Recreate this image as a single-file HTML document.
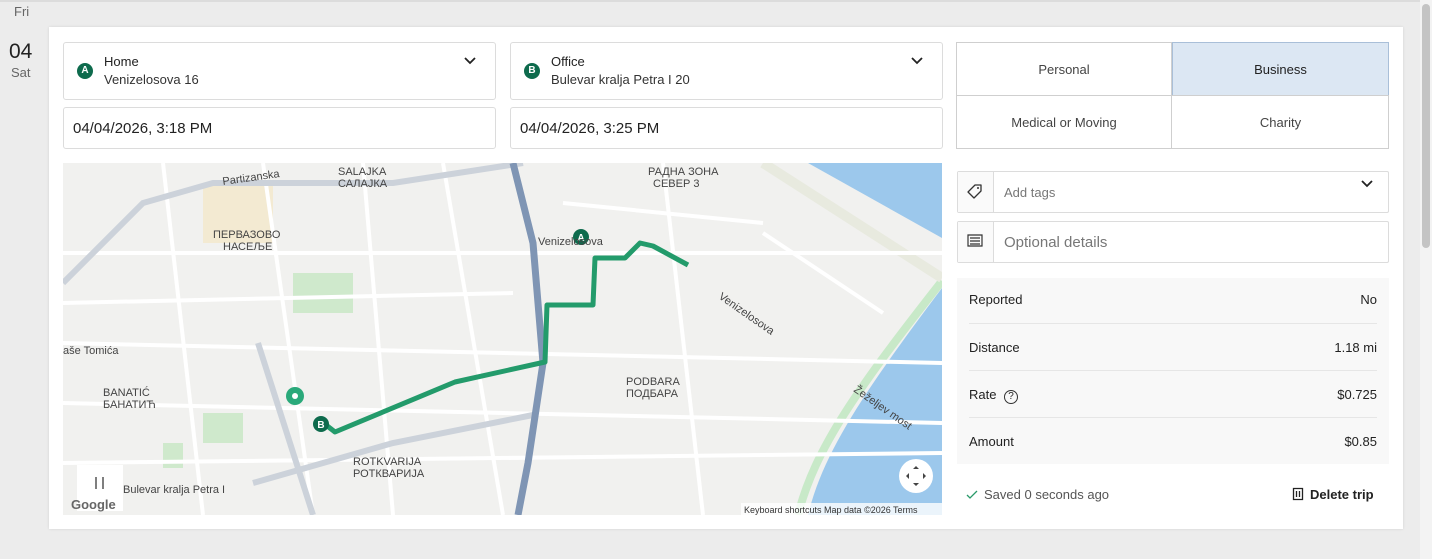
<!DOCTYPE html>
<html><head><meta charset="utf-8"><style>
*{box-sizing:border-box;margin:0;padding:0}
body{width:1432px;height:559px;background:#ececec;font-family:"Liberation Sans",sans-serif;color:#222;position:relative;overflow:hidden}
.abs{position:absolute}
.box{position:absolute;background:#fff;border:1px solid #dcdcdc;border-radius:3px}
.pin{width:16px;height:16px;border-radius:50%;background:#0e6b4d;color:#fff;font-size:10px;font-weight:bold;text-align:center;line-height:16px}
.t13{font-size:13px}
.row{position:absolute;left:969px;width:408px;font-size:13px;display:flex;justify-content:space-between}
</style></head><body>
<div class="abs" style="left:0;top:0;width:1420px;height:2px;background:#dcdcdc"></div>
<div class="abs" style="left:14px;top:4px;font-size:13px;color:#666">Fri</div>
<div class="abs" style="left:9px;top:40px;font-size:21px;color:#222">04</div>
<div class="abs" style="left:11px;top:65px;font-size:13px;color:#666">Sat</div>
<div class="abs" style="left:1420px;top:0;width:12px;height:559px;background:#f3f3f3"></div>
<div class="abs" style="left:1422px;top:4px;width:8px;height:244px;background:#c4c4c4;border-radius:4px"></div>
<div class="abs" style="left:49px;top:27px;width:1354px;height:502px;background:#fff;box-shadow:0 0 3px rgba(0,0,0,.1)"></div>

<div class="box" style="left:63px;top:42px;width:433px;height:58px"></div>
<div class="abs pin" style="left:77px;top:63px">A</div>
<div class="abs t13" style="left:104px;top:54px">Home</div>
<div class="abs t13" style="left:104px;top:72px;color:#333">Venizelosova 16</div>
<svg class="abs" style="left:464px;top:57px" width="12" height="8"><path d="M1 1l5 5 5-5" stroke="#222" stroke-width="1.8" fill="none"/></svg>
<div class="box" style="left:510px;top:42px;width:433px;height:58px"></div>
<div class="abs pin" style="left:524px;top:63px">B</div>
<div class="abs t13" style="left:551px;top:54px">Office</div>
<div class="abs t13" style="left:551px;top:72px;color:#333">Bulevar kralja Petra I 20</div>
<svg class="abs" style="left:911px;top:57px" width="12" height="8"><path d="M1 1l5 5 5-5" stroke="#222" stroke-width="1.8" fill="none"/></svg>
<div class="box" style="left:63px;top:107px;width:433px;height:42px"></div>
<div class="abs" style="left:73px;top:120px;font-size:15px">04/04/2026, 3:18 PM</div>
<div class="box" style="left:510px;top:107px;width:433px;height:42px"></div>
<div class="abs" style="left:520px;top:120px;font-size:15px">04/04/2026, 3:25 PM</div>

<div class="abs" style="left:956px;top:42px;width:433px;height:107px;border:1px solid #cfcfcf"></div>
<div class="abs" style="left:1172px;top:42px;width:217px;height:54px;background:#dce7f3;border:1px solid #a9bfd8"></div>
<div class="abs" style="left:956px;top:95px;width:433px;height:1px;background:#cfcfcf"></div>
<div class="abs" style="left:1171px;top:42px;width:1px;height:107px;background:#cfcfcf"></div>
<div class="abs t13" style="left:956px;top:62px;width:216px;text-align:center;color:#444">Personal</div>
<div class="abs t13" style="left:1172px;top:62px;width:217px;text-align:center">Business</div>
<div class="abs t13" style="left:956px;top:115px;width:216px;text-align:center;color:#444">Medical or Moving</div>
<div class="abs t13" style="left:1172px;top:115px;width:217px;text-align:center;color:#444">Charity</div>

<div class="box" style="left:957px;top:171px;width:432px;height:42px;border-radius:2px"></div>
<div class="abs" style="left:958px;top:172px;width:36px;height:40px;background:#fafafa;border-right:1px solid #dcdcdc"></div>
<svg class="abs" style="left:966px;top:183px" width="18" height="18"><path d="M9 2h6v6l-7 7-6-6z" stroke="#333" stroke-width="1.3" fill="none" stroke-linejoin="round"/><circle cx="12" cy="5" r="1" fill="#333"/></svg>
<div class="abs t13" style="left:1004px;top:185px;color:#777">Add tags</div>
<svg class="abs" style="left:1361px;top:180px" width="12" height="8"><path d="M1 1l5 5 5-5" stroke="#222" stroke-width="1.8" fill="none"/></svg>
<div class="box" style="left:957px;top:221px;width:432px;height:42px;border-radius:2px"></div>
<div class="abs" style="left:958px;top:222px;width:36px;height:40px;background:#fafafa;border-right:1px solid #dcdcdc"></div>
<svg class="abs" style="left:967px;top:234px" width="17" height="16"><path d="M1 1h14v11H1z M3 4h10M3 7h10M3 10h10" stroke="#333" stroke-width="1.2" fill="none"/></svg>
<div class="abs" style="left:1004px;top:234px;font-size:15px;color:#777">Optional details</div>

<div class="abs" style="left:957px;top:278px;width:432px;height:186px;background:#f8f8f8"></div>
<div class="row" style="top:292px"><span>Reported</span><span>No</span></div>
<div class="abs" style="left:969px;top:323px;width:408px;height:1px;background:#e6e6e6"></div>
<div class="row" style="top:340px"><span>Distance</span><span>1.18 mi</span></div>
<div class="abs" style="left:969px;top:370px;width:408px;height:1px;background:#e6e6e6"></div>
<div class="row" style="top:387px"><span>Rate <span style="display:inline-block;width:14px;height:14px;border:1.3px solid #333;border-radius:50%;font-size:10px;text-align:center;line-height:12px;margin-left:4px">?</span></span><span>$0.725</span></div>
<div class="abs" style="left:969px;top:417px;width:408px;height:1px;background:#e6e6e6"></div>
<div class="row" style="top:434px"><span>Amount</span><span>$0.85</span></div>
<svg class="abs" style="left:966px;top:490px" width="12" height="10"><path d="M1 5l3 3 7-7" stroke="#2a9a6a" stroke-width="1.3" fill="none"/></svg>
<div class="abs t13" style="left:984px;top:487px;color:#555">Saved 0 seconds ago</div>
<svg class="abs" style="left:1292px;top:487px" width="12" height="14"><path d="M1.5 1.5h9v11h-9z M4.5 4v6M7.5 4v6" stroke="#222" stroke-width="1.3" fill="none"/></svg>
<div class="abs t13" style="left:1310px;top:487px;font-weight:bold">Delete trip</div>

<svg class="abs" style="left:63px;top:163px" width="879" height="352" viewBox="0 0 879 352">
<rect width="879" height="352" fill="#f1f1ef"/>
<path d="M745 0 L879 0 L879 75Z" fill="#9cc8ec"/>
<path d="M745 352 C760 290 800 230 879 125 L879 352Z" fill="#9cc8ec"/>
<path d="M735 352 C752 285 795 225 879 118" stroke="#c8e9c8" stroke-width="8" fill="none"/>
<path d="M700 0 L879 115" stroke="#e8eadf" stroke-width="10" fill="none"/>
<rect x="140" y="20" width="70" height="60" fill="#f3ead2"/>
<rect x="230" y="110" width="60" height="40" fill="#cfe9cc"/>
<rect x="100" y="280" width="20" height="25" fill="#cfe9cc"/>
<rect x="140" y="250" width="40" height="30" fill="#cfe9cc"/>
<g stroke="#fff" stroke-width="4" fill="none">
<path d="M0 90 L879 90"/><path d="M0 180 L879 200"/><path d="M0 240 L879 260"/><path d="M100 0 L140 352"/><path d="M300 0 L330 352"/><path d="M380 0 L440 352"/><path d="M600 0 L640 352"/><path d="M0 300 L879 290"/><path d="M200 0 L250 352"/><path d="M700 70 L820 150"/><path d="M500 40 L700 60"/><path d="M0 140 L450 130"/>
</g>
<g stroke="#ccd2da" stroke-width="6" fill="none">
<path d="M0 120 L80 40 L150 20 L330 20 L460 0"/><path d="M190 320 L330 280 L470 252"/><path d="M195 180 L250 352"/>
</g>
<path d="M450 0 L470 80 L480 200 L465 300 L455 352" stroke="#7f95b4" stroke-width="7" fill="none"/>
<path d="M263 262 L272 269 L392 219 L482 199 L484 142 L530 142 L532 95 L562 95 L577 80 L590 83 L625 102" stroke="#239b6b" stroke-width="5" fill="none" stroke-linejoin="round"/>
<circle cx="518" cy="74" r="8" fill="#0e6b4d"/><text x="518" y="78" font-size="10" font-weight="bold" fill="#fff" text-anchor="middle">A</text>
<circle cx="258" cy="261" r="8" fill="#0e6b4d"/><text x="258" y="265" font-size="10" font-weight="bold" fill="#fff" text-anchor="middle">B</text>
<circle cx="232" cy="233" r="9" fill="#2aa97a"/><circle cx="232" cy="233" r="3" fill="#fff"/>
<g font-size="11" fill="#444" font-family="Liberation Sans">
<text x="275" y="12">SALAJKA</text><text x="275" y="24">САЛАЈКА</text><text x="585" y="12">РАДНА ЗОНА</text><text x="590" y="24">СЕВЕР 3</text>
<text x="150" y="75">ПЕРВАЗОВО</text><text x="160" y="87">НАСЕЉЕ</text><text x="475" y="82">Venizelosova</text>
<text x="0" y="191">aše Tomića</text><text x="40" y="233">BANATIĆ</text><text x="40" y="245">БАНАТИЋ</text>
<text x="563" y="222">PODBARA</text><text x="563" y="234">ПОДБАРА</text><text x="290" y="302">ROTKVARIJA</text><text x="290" y="314">РОТКВАРИЈА</text>
<text x="160" y="22" transform="rotate(-8 160 22)">Partizanska</text><text x="60" y="330">Bulevar kralja Petra I</text>
<text x="655" y="135" transform="rotate(35 655 135)">Venizelosova</text><text x="790" y="228" transform="rotate(35 790 228)">Žeželjev most</text>
</g>
<rect x="14" y="302" width="46" height="46" fill="#fff"/>
<path d="M33 314v12M40 314v12" stroke="#555" stroke-width="1.5"/>
<circle cx="853" cy="313" r="17" fill="#fff"/>
<path d="M853 303l-3 3h6zM853 323l-3-3h6zM843 313l3-3v6zM863 313l-3-3v6z" fill="#444"/>
<text x="8" y="346" font-size="13" font-weight="bold" fill="#666">Google</text>
<rect x="678" y="340" width="201" height="12" fill="#fff" opacity=".8"/>
<text x="681" y="350" font-size="9" fill="#333">Keyboard shortcuts   Map data ©2026    Terms</text>
</svg>
</body></html>
